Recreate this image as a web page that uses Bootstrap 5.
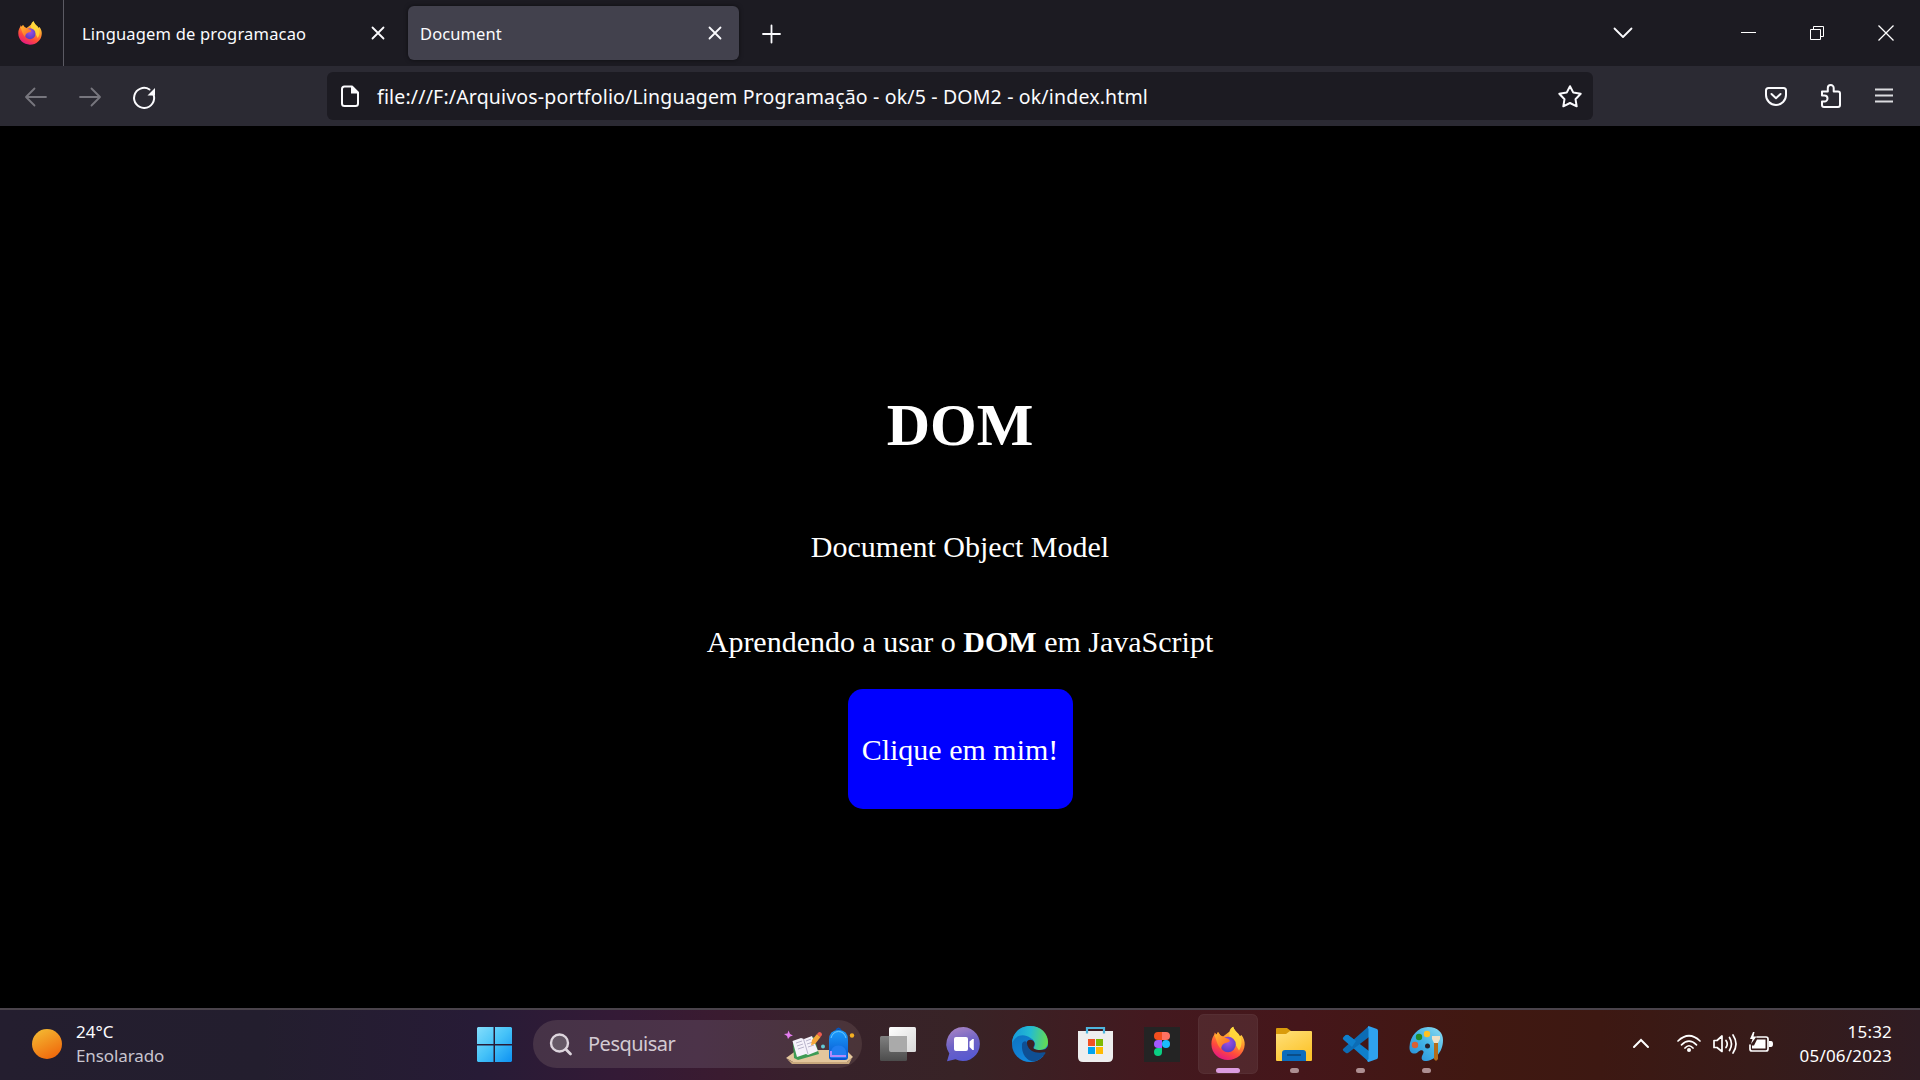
<!DOCTYPE html>
<html lang="pt-br">
<head>
<meta charset="utf-8">
<title>Document</title>
<link href="https://cdn.jsdelivr.net/npm/bootstrap@5.3.0/dist/css/bootstrap.min.css" rel="stylesheet">
<style>
body{width:1920px;height:1080px;overflow:hidden;background:#000;color:#fbfbfe;font-family:"Noto Sans",sans-serif;font-size:17px;line-height:24px}
svg{display:block;flex:none}
.ln{fill:none;stroke:#fbfbfe;stroke-width:1.8;stroke-linecap:round;stroke-linejoin:round}
.tabstrip{height:66px;background:#1c1b22}
.brand-slot{width:64px;height:66px;padding-left:18px;border-right:1px solid #5b5a63}
.tab-item{height:54px;font-size:16.5px}
.tab-item span{padding-top:1px}
.tab-idle{width:344px;padding-left:18px;letter-spacing:.18px}
.tab-live{width:331px;padding-left:12px;background:#42414d;border-radius:6px;box-shadow:0 0 4px #0008;letter-spacing:.1px}
.toolbar{height:60px;background:#2b2a33}
.address{width:1266px;height:48px;background:#1c1b22;border-radius:6px;font-size:19.5px;letter-spacing:.17px}
.address span{padding-top:2px}
.page{height:882px;font-family:"Liberation Serif",serif;font-size:30px;line-height:35px}
.page h1{font-size:60px;line-height:68px;font-weight:700;margin:265px 0 0}
.page .p-one{margin:70px 0 0}
.page .p-two{margin:60px 0 0}
.page .btn-dom{width:225px;height:120px;margin-top:30px;padding:0;background:#00f;color:#fff;border:0;border-radius:15px;font-size:30px}
.taskbar{height:72px;border-top:2px solid #4a434b;background:linear-gradient(90deg,#241e2f 0,#231e2e 260px,#271b36 480px,#341a36 620px,#3a1b30 720px,#37222a 830px,#382326 960px,#43191f 1150px,#45161a 1300px,#401811 1480px,#3d1812 1600px,#371b19 1750px,#2f1c23 1920px)}
.weather{width:462px;padding-left:31px}
.two-line{padding-bottom:2px}
.dim{color:#c9c5cf;letter-spacing:-.1px}
.finder{width:329px;height:48px;border-radius:24px;background:linear-gradient(90deg,#463347,#4c3349 50%,#4a3438);margin:0 3px 2px 5px;font-size:20px;letter-spacing:-.5px;color:#d3cad2}
.clock{width:112px;letter-spacing:.2px}
</style>
<script src="https://cdn.jsdelivr.net/npm/bootstrap@5.3.0/dist/js/bootstrap.bundle.min.js"></script>
</head>
<body class="d-flex flex-column">
<svg width="0" height="0" class="position-absolute">
<defs>
<linearGradient id="ffb" x1=".8" y1="0" x2=".3" y2="1"><stop offset="0" stop-color="#fff44f"/><stop offset=".35" stop-color="#ffa02e"/><stop offset=".7" stop-color="#ff4a3c"/><stop offset="1" stop-color="#e31587"/></linearGradient>
<radialGradient id="ffp" cx=".5" cy=".35" r=".6"><stop offset="0" stop-color="#a050e8"/><stop offset="1" stop-color="#5b3fc4"/></radialGradient>
<linearGradient id="fff" x1="0" y1="0" x2="1" y2="1"><stop offset="0" stop-color="#ffbd2e"/><stop offset="1" stop-color="#ff5a2c"/></linearGradient>
<linearGradient id="sun" x1=".2" y1="0" x2=".7" y2="1"><stop offset="0" stop-color="#f3b932"/><stop offset="1" stop-color="#f0670b"/></linearGradient>
<linearGradient id="win" gradientUnits="userSpaceOnUse" x1="477" y1="1027" x2="512" y2="1062"><stop offset="0" stop-color="#84defc"/><stop offset=".5" stop-color="#45c2f8"/><stop offset="1" stop-color="#0d91f2"/></linearGradient>
<linearGradient id="bag" x1="0" y1="0" x2="0" y2="1"><stop offset="0" stop-color="#1b9cfb"/><stop offset="1" stop-color="#0753cf"/></linearGradient>
<linearGradient id="tvw" x1="0" y1="0" x2="1" y2="1"><stop offset="0" stop-color="#fff"/><stop offset="1" stop-color="#d8d8d8"/></linearGradient>
<linearGradient id="tvg" x1="0" y1="0" x2="0" y2="1"><stop offset="0" stop-color="#808080"/><stop offset="1" stop-color="#4c4c4c"/></linearGradient>
<linearGradient id="cht" x1=".3" y1="0" x2=".6" y2="1"><stop offset="0" stop-color="#a683c4"/><stop offset=".5" stop-color="#6d62c6"/><stop offset="1" stop-color="#5558d2"/></linearGradient>
<linearGradient id="edg" x1="0" y1=".4" x2="1" y2=".5"><stop offset="0" stop-color="#1698dc"/><stop offset=".5" stop-color="#25bcd0"/><stop offset="1" stop-color="#64dc51"/></linearGradient>
<linearGradient id="edb" x1="0" y1="0" x2=".5" y2="1"><stop offset="0" stop-color="#0b6cb8"/><stop offset="1" stop-color="#1389df"/></linearGradient>
<linearGradient id="fol" x1="0" y1="0" x2=".6" y2="1"><stop offset="0" stop-color="#ffe07a"/><stop offset="1" stop-color="#fcc42c"/></linearGradient>
<linearGradient id="pal" x1="1" y1="0" x2="0" y2="1"><stop offset="0" stop-color="#8fdcf2"/><stop offset=".5" stop-color="#43b4e6"/><stop offset="1" stop-color="#2189d6"/></linearGradient>
<symbol id="fox" viewBox="0 0 34 34">
<path d="M17 33.5C8 33.500 .4 27 .4 17.500 .4 13.500 1.600 10.500 3 8.500L3.800 6 5.600 8 7 5.600 9.500 9 12 10 16 7 18.500 5C19 2.500 20.500 1 22.200 .2 23 3 25 5 27.500 7.500L28.500 10 30.500 8.500C33 12 33.800 15 33.700 18 33.300 27 26 33.500 17 33.500Z" fill="url(#ffb)"/>
<path d="M22.200 .2C23 3 25 5 27.500 7.500 31.500 12 31.500 19 28 24 25 19 23 15 18.500 10 18 6 20 2 22.200 .2Z" fill="#ffdb3b" opacity=".85"/>
<circle cx="17" cy="18" r="7.800" fill="url(#ffp)"/>
<path d="M3.200 8.500 5.600 8 7 5.600 9.500 9 12.500 10.500 17.500 12.500 19 14.500C17.500 16 15 16 13.200 17 11 18 10.500 20 10 22.500 6 19 6 14 3.200 8.500Z" fill="url(#fff)"/>
</symbol>
</defs>
</svg>

<header class="tabstrip d-flex align-items-center flex-shrink-0">
  <div class="brand-slot d-flex align-items-center"><svg width="24" height="24" viewBox="0 0 34 34"><use href="#fox" width="34" height="34"/></svg></div>
  <div class="tab-item tab-idle d-flex align-items-center"><span>Linguagem de programacao</span>
    <svg class="ms-auto" width="40" height="54" viewBox="368 6 40 54"><path class="ln" d="M372.500 27.500 383.500 38.500M383.500 27.500 372.500 38.500"/></svg></div>
  <div class="tab-item tab-live d-flex align-items-center"><span>Document</span>
    <svg class="ms-auto" width="40" height="54" viewBox="699 6 40 54"><path class="ln" d="M709.500 27.500 720.500 38.500M720.500 27.500 709.500 38.500"/></svg></div>
  <svg width="66" height="66" viewBox="739 0 66 66"><path class="ln" d="M763 34H780M771.500 25.500V42.500"/></svg>
  <svg class="ms-auto" width="320" height="66" viewBox="1600 0 320 66"><path class="ln" d="M1614.500 28.500 1623 37 1631.500 28.500"/><path fill="none" stroke="#fff" d="M1741 32.500H1756M1810.500 29.500H1820.500V39.500H1810.500ZM1813.500 29V26.500H1823.500V36.500H1821"/><path fill="none" stroke="#fff" stroke-width="1.300" d="M1878.500 25.500 1893.500 40.500M1893.500 25.500 1878.500 40.500"/></svg>
</header>
<nav class="toolbar d-flex align-items-center flex-shrink-0">
  <svg width="327" height="60" viewBox="0 66 327 60"><g class="ln" style="stroke:#77767e"><path d="M46 97H26.500M34.500 88.500 26 97 34.500 105.500M80 97H99.500M91.500 88.500 100 97 91.500 105.500"/></g><path class="ln" style="stroke-width:2" d="M153.500 94.500A10 10 0 1 1 149.500 89.500"/><path fill="#fbfbfe" d="M155 88V95.500H147.500Z"/></svg>
  <div class="address d-flex align-items-center">
    <svg width="50" height="48" viewBox="327 72 50 48"><path class="ln" style="stroke-width:2" d="M344.500 86.500H352L358 92.500V103.500Q358 106 355.500 106H344.500Q342 106 342 103.500V89Q342 86.500 344.500 86.500Z"/><path fill="#fbfbfe" d="M351 86V93.500H358.500Z"/></svg>
    <span class="text-nowrap">file:///F:/Arquivos-portfolio/Linguagem Programação - ok/5 - DOM2 - ok/index.html</span>
    <svg class="ms-auto" width="44" height="48" viewBox="1549 72 44 48"><path class="ln" style="stroke-width:2" d="M1570 86.200 1573.300 92.600 1580.700 93.800 1575.500 99.200 1576.700 106.300 1570 103 1563.300 106.300 1564.500 99.200 1559.300 93.800 1566.700 92.600Z"/></svg>
  </div>
  <svg class="ms-auto" width="160" height="60" viewBox="1760 66 160 60"><g class="ln" style="stroke-width:2"><path d="M1768.500 88H1783.500Q1786 88 1786 90.500V95A10 10 0 0 1 1766 95V90.500Q1766 88 1768.500 88ZM1771.500 94 1776 98.200 1780.500 94"/><path d="M1822 91.500H1827.800V88A2.700 2.700 0 0 1 1833.700 88V91.500H1838Q1840 91.500 1840 93.500V105Q1840 107 1838 107H1824Q1822 107 1822 105V101.500H1824.500A3 3 0 0 0 1824.500 95.500H1822Z"/></g><path stroke="#dcdce0" stroke-width="2" d="M1875 89.500H1893M1875 95.500H1893M1875 101.500H1893"/></svg>
</nav>

<main class="page d-flex flex-column align-items-center flex-shrink-0 text-white">
  <h1>DOM</h1>
  <p class="p-one">Document Object Model</p>
  <p class="p-two">Aprendendo a usar o <strong>DOM</strong> em JavaScript</p>
  <button class="btn btn-dom">Clique em mim!</button>
</main>

<footer class="taskbar d-flex align-items-center flex-shrink-0">
  <div class="weather d-flex align-items-center"><svg width="45" height="48" viewBox="31 1020 45 48"><circle cx="47" cy="1043" r="15" fill="url(#sun)"/></svg>
    <div class="two-line"><div>24°C</div><div class="dim">Ensolarado</div></div></div>
  <svg width="66" height="70" viewBox="462 1010 66 70"><path fill="url(#win)" d="M478 1027H493.500V1044H477V1028ZM495 1027H511L512 1028V1044H495ZM477 1045.500H493.500V1062H478L477 1061ZM495 1045.500H512V1061L511 1062H495Z"/></svg>
  <div class="finder d-flex align-items-center">
    <svg width="55" height="48" viewBox="533 1020 55 48"><circle cx="559.500" cy="1043" r="8.500" fill="#655866" stroke="#ddd5dd" stroke-width="2.400"/><path stroke="#ddd5dd" stroke-width="2.800" stroke-linecap="round" d="M565.800 1049.300 570.500 1054"/></svg>
    <span>Pesquisar</span>
    <svg class="ms-auto" width="80" height="48" viewBox="782 1020 80 48">
      <path fill="#e3c69c" d="M786 1058 797 1050H846L853 1057 847 1062H793Z"/><path fill="#c9a87d" d="M787 1059 793 1062H847L852 1058 849 1064H792Z"/>
      <path fill="#3e9b54" d="M793 1043 814 1037 819 1054 798 1060 794 1058Z"/><path fill="#f5f2fa" d="M792.500 1041 801 1038 804 1039 812 1036 818 1051 808 1055 806 1054 797 1057Z"/><path stroke="#a9a5bf" stroke-width=".8" fill="none" d="M803.500 1039 808 1054M796 1043 802 1041M797 1046 803 1044M798 1049 804 1047M806 1041 811 1039M807 1044 813 1042M808 1047 814 1045"/>
      <path fill="#f6a83a" d="M811 1045.500 812 1040 817 1034 820.500 1037 815.500 1043.500Z"/><path fill="#ee5c50" d="M817 1034 819 1032Q822 1032 822 1035L820.500 1037Z"/>
      <path fill="none" stroke="#0754b9" stroke-width="2" d="M836 1031Q838.500 1026 841 1031"/><path fill="url(#bag)" d="M829 1040Q829 1030 838.500 1030T848 1040V1057Q848 1060 845 1060H832Q829 1060 829 1057Z"/><path fill="none" stroke="#69c8ff" d="M831 1038Q833 1031.500 838.500 1031.500T846 1038"/><path fill="#207df0" d="M830.500 1054Q831 1045.500 838.500 1045.500T846.500 1054V1058H830.500Z"/><path fill="none" stroke="#b38afa" stroke-width="2" d="M831 1051V1056H846"/>
      <path fill="#e47cef" d="M788.500 1030.500 790 1034 793 1035.500 790 1036.500 788 1039 787 1036 784 1034 787.500 1033.500Z"/><circle cx="823" cy="1046.500" r="2" fill="#62c8d5"/><circle cx="852" cy="1035.500" r="2.200" fill="#f4b022"/>
    </svg>
  </div>
  <svg width="66" height="70" viewBox="865 1010 66 70"><rect x="889" y="1027" width="27" height="25" rx="1.500" fill="url(#tvw)"/><rect x="880" y="1036" width="27" height="25" rx="1.500" fill="url(#tvg)"/><path fill="#aaa" d="M889 1036H907V1052H891Q889 1052 889 1050Z"/></svg>
  <svg width="66" height="70" viewBox="930.500 1010 66 70"><path fill="url(#cht)" d="M963 1027A17 17 0 1 1 955 1059.300L946.500 1061.300 948.800 1053.500A17 17 0 0 1 963 1027Z"/><rect x="953.500" y="1037" width="14" height="14" rx="2" fill="#fff"/><path fill="#fff" d="M969 1041.500 972 1039H973.300V1050H972L969 1047Z"/></svg>
  <svg width="66" height="70" viewBox="997 1010 66 70"><circle cx="1030" cy="1044" r="18" fill="url(#edb)"/><path fill="url(#edg)" d="M1012 1044C1012 1033 1020 1026 1030 1026 1041 1026 1048 1033.500 1048 1042 1048 1048 1043 1050.500 1038.500 1050 1034.500 1049.500 1033.500 1048.500 1034 1047.500 1036 1045 1035 1040 1030.500 1038 1023 1032.500 1014 1036 1012 1044Z"/><path fill="#3d2024" d="M1026.800 1043C1027 1038.500 1033.500 1039 1034.500 1043 1035 1046 1032.500 1047 1034 1048.800 1037 1050.500 1042 1050.500 1045.500 1049L1049 1045V1056L1044 1056C1036 1056 1032 1052 1030 1050 1027.500 1048 1026.500 1046 1026.800 1043Z"/><path fill="#0f4f94" d="M1022 1044C1021 1055 1028 1062.500 1035.500 1061.300 1040 1059.500 1043 1057 1045.500 1053.300 1045.500 1052 1045 1052 1044 1052.300 1036 1054 1028 1051 1027 1043.500 1026.500 1040 1023 1041 1022 1044Z"/></svg>
  <svg width="66" height="70" viewBox="1063 1010 66 70"><path fill="#eee" d="M1078 1031H1113V1057Q1113 1062 1108 1062H1083Q1078 1062 1078 1057Z"/><path fill="none" stroke="#4db5dd" stroke-width="2.200" d="M1087 1033.500V1028H1104V1033.500"/><path fill="#f25022" d="M1088 1039h7v7h-7z"/><path fill="#7fba00" d="M1096 1039h7v7h-7z"/><path fill="#00a4ef" d="M1088 1047h7v7h-7z"/><path fill="#ffb900" d="M1096 1047h7v7h-7z"/></svg>
  <svg width="66" height="70" viewBox="1129 1010 66 70"><rect x="1144" y="1027" width="36" height="35" fill="#242424"/><path fill="#f24e1e" d="M1162 1032H1158A4 4 0 0 0 1158 1040H1162Z"/><path fill="#ff7262" d="M1162 1032H1166A4 4 0 0 1 1166 1040H1162Z"/><path fill="#a259ff" d="M1162 1040H1158A4 4 0 0 0 1158 1048H1162Z"/><circle cx="1166" cy="1044" r="4" fill="#1abcfe"/><path fill="#0acf83" d="M1162 1048H1158A4 4 0 1 0 1162 1052Z"/></svg>
  <svg width="66" height="70" viewBox="1195 1010 66 70"><rect x="1198.500" y="1014.500" width="59" height="59" rx="5" fill="#fff" fill-opacity=".07" stroke="#fff" stroke-opacity=".07"/><use href="#fox" x="1211" y="1026" width="34" height="35"/><rect x="1216" y="1068" width="24" height="5" rx="2.500" fill="#dc9ce0"/></svg>
  <svg width="66" height="70" viewBox="1261 1010 66 70"><path fill="#d99b0b" d="M1276 1029Q1276 1028 1277 1028H1287L1291 1031 1287 1036H1276Z"/><path fill="url(#fol)" d="M1276 1034H1286L1290 1031H1311Q1312 1031 1312 1032V1060Q1312 1061 1311 1061H1277Q1276 1061 1276 1060Z"/><path fill="#0b6cbd" d="M1282 1061V1053Q1282 1050 1285 1050H1303Q1306 1050 1306 1053V1061Z"/><path stroke="#0b4377" stroke-width="1.500" d="M1287 1055H1301"/><rect x="1290" y="1068" width="9" height="5" rx="2.500" fill="#ae8f92"/></svg>
  <svg width="66" height="70" viewBox="1327 1010 66 70"><path fill="#0f7fcc" d="M1343.500 1037 1346 1035Q1347 1034.500 1348 1035L1369 1051V1062L1343.500 1039.500Q1342 1038.500 1343.500 1037Z"/><path fill="#0c6cb5" d="M1343.500 1051 1346 1053Q1347 1053.500 1348 1053L1369 1037V1026L1343.500 1048.500Q1342 1049.500 1343.500 1051Z"/><path fill="#0f7fcc" d="M1343.500 1039.500 1352 1047 1356 1041 1348 1035 1345 1035.500Z"/><path fill="#2fa2ee" d="M1368.500 1026 1377 1029Q1378 1029.500 1378 1031V1057Q1378 1058.500 1377 1059L1368.500 1062Q1366 1061 1368.500 1059V1029Q1367 1027 1368.500 1026Z"/><rect x="1356" y="1068" width="9" height="5" rx="2.500" fill="#ae8f92"/></svg>
  <svg width="66" height="70" viewBox="1393 1010 66 70"><path fill="url(#pal)" d="M1428 1027C1438 1027 1443 1033 1443 1040 1443 1053 1434 1061 1425 1061 1421 1061 1421 1057 1423 1054 1425 1050 1421 1049 1418 1052 1415 1055 1409 1054 1409.500 1047 1410 1036 1418 1027 1428 1027Z"/><circle cx="1427.500" cy="1046" r="2.500" fill="#26222c"/><circle cx="1415" cy="1045" r="3.200" fill="#da6032"/><circle cx="1419" cy="1037" r="3.200" fill="#218c2b"/><circle cx="1427" cy="1034" r="3.200" fill="#ffc220"/><path fill="#b36c18" d="M1434 1042H1438V1059Q1436 1062.500 1434 1059Z"/><path fill="#eee1c6" d="M1432 1036H1440V1039L1438 1043H1434L1432 1039Z"/><rect x="1422" y="1068" width="9" height="5" rx="2.500" fill="#ae8f92"/></svg>
  <svg class="ms-auto" width="160" height="70" viewBox="1620 1010 160 70"><g fill="none" stroke="#fff" stroke-width="1.700" stroke-linecap="round"><path stroke-width="2" d="M1634 1047 1641 1040 1648 1047"/><path d="M1678 1041Q1689 1030.500 1700 1041M1681.500 1044.800Q1689 1037.500 1696.500 1044.800M1685 1048Q1689 1043.500 1693 1048"/><path d="M1714 1040.500H1717L1722 1036V1051.500L1717 1047.500H1714Z" stroke-linejoin="round"/><path d="M1726 1040.500Q1728.500 1044 1726 1047.500M1729.500 1037.500Q1733.500 1044 1729.500 1050.500M1733 1035Q1739 1044 1733 1053"/><path d="M1757 1037H1766Q1768 1037 1768 1039V1049Q1768 1051 1766 1051H1752Q1750 1051 1750 1049V1045"/></g><circle cx="1689" cy="1050" r="2" fill="#fff"/><path fill="#fff" d="M1769 1041H1771Q1773 1041 1773 1044T1771 1047H1769ZM1757 1039.500H1765.500V1048.500H1752V1045.500H1754ZM1753 1032 1750 1039H1752.500L1751 1044 1756.500 1036.500H1753.500L1754.500 1032Z"/></svg>
  <div class="clock two-line text-end text-white me-1"><div>15:32</div><div>05/06/2023</div></div>
  <div class="pe-4"></div>
</footer>
</body>
</html>
